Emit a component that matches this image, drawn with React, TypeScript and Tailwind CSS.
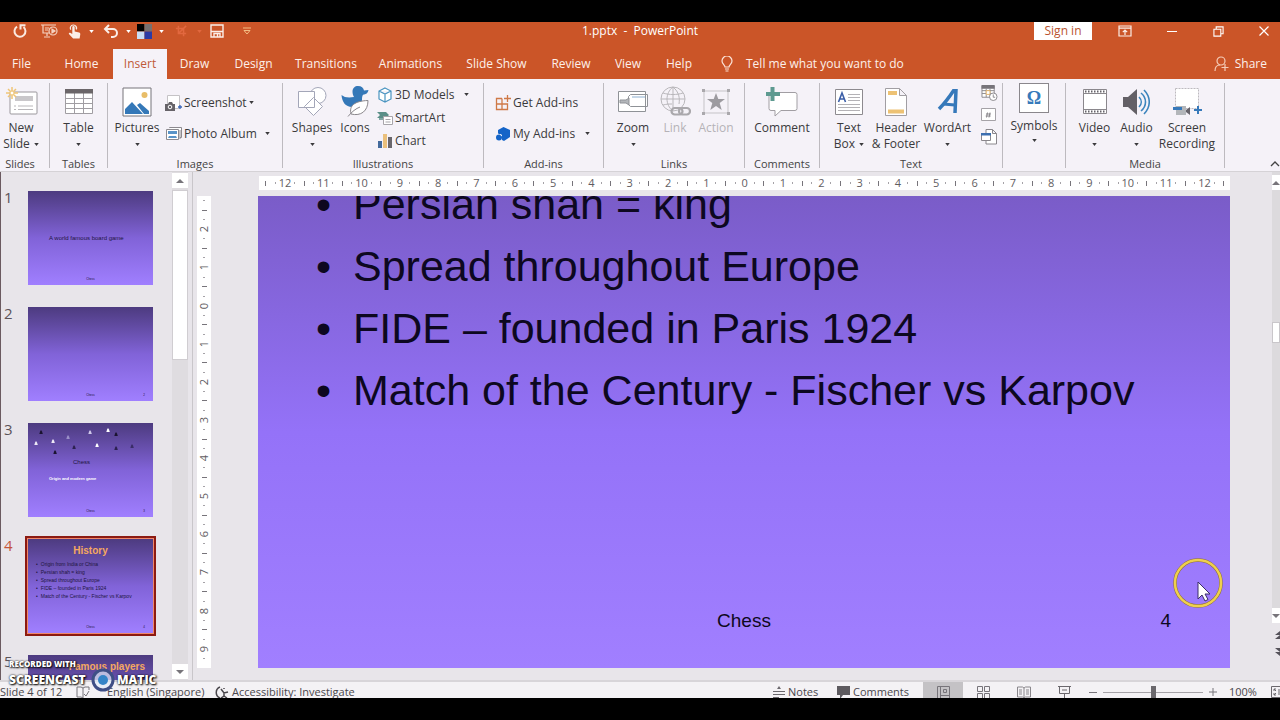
import type { ReactNode } from "react";
import clsx from "clsx";

const Caret = ({ className }: { className?: string }) => (
  <svg viewBox="0 0 6 4" className={clsx("h-[3px] w-[5px] shrink-0 fill-current", className)}>
    <path d="M0 0h6L3 4z" />
  </svg>
);

/* ---------- Title bar ---------- */

const QuickButton = ({ label, width, children }: { label: string; width: string; children: ReactNode }) => (
  <button type="button" aria-label={label} className={clsx("flex h-[18px] shrink-0 items-center justify-center", width)}>
    {children}
  </button>
);

const TitleBar = () => (
  <header className="grid h-[27px] grid-cols-[1fr_auto_1fr] items-start text-white">
    <div className="flex pl-[5px]">
      <QuickButton label="Repeat" width="w-[30px]">
        <svg viewBox="0 0 16 16" className="h-4 w-4 fill-none stroke-[#fbe9e0] stroke-2">
          <path d="M5 3.600A5.500 5.500 0 1 0 11.500 4M8.500 6.500V2.200H13.500" />
        </svg>
      </QuickButton>
      <QuickButton label="From beginning" width="w-[28px]">
        <svg viewBox="0 0 18 16" className="h-4 w-[18px] fill-none stroke-[#f5d3c2] stroke-[1.2]">
          <path d="M1 2h15M3 2v8h6M5 5h4M5 7h3M7 10v3M4 14h6" />
          <circle cx="13" cy="8" r="4" />
          <path d="M12 6v4l3-2z" fill="#f5d3c2" />
        </svg>
      </QuickButton>
      <QuickButton label="Touch mode" width="w-[22px]">
        <svg viewBox="0 0 14 16" className="h-[15px] w-[13px] fill-[#fbeee8]">
          <path d="M2.500 6.500a4 4 0 1 1 7-.5l-1.400-.6a2.600 2.600 0 1 0-4.500.2zM4.600 3.500a1.300 1.300 0 0 1 2.600 0V8l4.800 1.200c1 .3 1.400 1 1.200 2L12.500 15.500H5.500L1 10.800c-.4-1 .6-1.800 1.800-1.200l1.800 1z" />
        </svg>
      </QuickButton>
      <QuickButton label="Touch options" width="w-[12px]"><Caret /></QuickButton>
      <QuickButton label="Undo" width="w-[28px]">
        <svg viewBox="0 0 16 14" className="h-[14px] w-4 fill-none stroke-[#fbeee8] stroke-2">
          <path d="M6 1L2 5l4 4M2 5h8a4 4 0 0 1 0 8H8" />
        </svg>
      </QuickButton>
      <QuickButton label="Undo history" width="w-[6px]"><Caret /></QuickButton>
      <QuickButton label="Colors" width="w-[26px]">
        <svg viewBox="0 0 16 16" className="h-[15px] w-[15px]">
          <path d="M0 0h8v8H0z" fill="#000" />
          <path d="M8 0h8v8H8z" fill="#77706f" />
          <path d="M0 8h8v8H0z" fill="#c9ddf5" />
          <path d="M8 8h8v8H8z" fill="#2b3aa5" />
        </svg>
      </QuickButton>
      <QuickButton label="Color options" width="w-[8px]"><Caret /></QuickButton>
      <QuickButton label="Crop" width="w-[32px]">
        <svg viewBox="0 0 14 14" className="h-[12px] w-[12px] fill-none stroke-[#e2683f] stroke-[1.8]">
          <path d="M4 1v9h9M1 4h9v9M13 1L4 10" />
        </svg>
      </QuickButton>
      <QuickButton label="Crop options" width="w-[4px]"><Caret className="text-[#e2683f]" /></QuickButton>
      <QuickButton label="Save" width="w-[32px]">
        <svg viewBox="0 0 14 14" className="h-[14px] w-[14px] fill-none stroke-[#fbeee8] stroke-[1.4]">
          <path d="M1 1h12v12H1zM1 7.500h12M4 13v-3.500h6V13M7.500 10v3" />
        </svg>
      </QuickButton>
      <QuickButton label="Customize toolbar" width="w-[28px]">
        <svg viewBox="0 0 8 8" className="h-2 w-2 fill-none stroke-[#f3bd83]">
          <path d="M0 1h8M1 3.500h6L4 7z" />
        </svg>
      </QuickButton>
    </div>
    <h1 className="h-[18px] text-[12px] leading-[18px]">1.pptx&nbsp; -&nbsp; PowerPoint</h1>
    <div className="flex justify-end">
      <button type="button" className="mr-[9px] h-[18px] w-[58px] bg-white text-[12px] leading-[18px] text-[#b9532f]">Sign in</button>
      <QuickButton label="Ribbon display options" width="w-[47px]">
        <svg viewBox="0 0 14 12" className="h-3 w-[14px] fill-none stroke-[#fbeee8] stroke-[1.2]">
          <path d="M1 1h12v10H1zM1 3.200h12M7 10V5.500M4.800 7.200L7 5l2.200 2.200" />
        </svg>
      </QuickButton>
      <QuickButton label="Minimize" width="w-[47px]"><span className="h-px w-[10px] bg-white" /></QuickButton>
      <QuickButton label="Restore" width="w-[47px]">
        <svg viewBox="0 0 12 12" className="h-[11px] w-[11px] fill-none stroke-white stroke-[1.2]">
          <path d="M1 3.500h7.500V11H1zM3.500 3.500V1H11v7.500H8.500" />
        </svg>
      </QuickButton>
      <QuickButton label="Close" width="ml-[6px] w-[32px]">
        <svg viewBox="0 0 10 10" className="h-[10px] w-[10px] stroke-white stroke-[1.2]">
          <path d="M.5.5l9 9M9.500.5l-9 9" />
        </svg>
      </QuickButton>
    </div>
  </header>
);

/* ---------- Tabs ---------- */

const tabs = [
  { label: "File", width: "w-[43px] mr-[7px]" },
  { label: "Home", width: "w-[63px]" },
  { label: "Insert", width: "w-[54px]" },
  { label: "Draw", width: "w-[55px]" },
  { label: "Design", width: "w-[63px]" },
  { label: "Transitions", width: "w-[82px]" },
  { label: "Animations", width: "w-[87px]" },
  { label: "Slide Show", width: "w-[85px]" },
  { label: "Review", width: "w-[64px]" },
  { label: "View", width: "w-[50px]" },
  { label: "Help", width: "w-[52px]" },
];

const TabBar = () => (
  <nav className="flex h-[30px] text-[12px] text-[#fdf0ea]">
    {tabs.map(({ label, width }) => (
      <button
        key={label}
        type="button"
        className={clsx("shrink-0 whitespace-nowrap", width, label === "Insert" && "bg-[#f5f2f8] text-[#bf5a38]")}
      >
        {label}
      </button>
    ))}
    <button type="button" className="ml-[16px] flex items-center gap-[13px] whitespace-nowrap">
      <svg viewBox="0 0 12 16" className="h-4 w-3 fill-none stroke-[#fbe3d8] stroke-[1.2]">
        <path d="M4 11c0-2-3-3-3-6a5 5 0 0 1 10 0c0 3-3 4-3 6zM4 13h4M4.500 15h3" />
      </svg>
      Tell me what you want to do
    </button>
    <button type="button" className="ml-auto flex items-center gap-[6px] pr-[13px]">
      <svg viewBox="0 0 15 16" className="h-4 w-[15px] fill-none stroke-[#f5cdb9] stroke-[1.2]">
        <circle cx="7" cy="5" r="4" />
        <path d="M1 15c0-4 2-6 5-6M11 8v7M7.500 11.500h7" />
      </svg>
      Share
    </button>
  </nav>
);

/* ---------- Ribbon ---------- */

const Group = ({ label, width, children }: { label?: string; width: string; children: ReactNode }) => (
  <section className={clsx("flex h-[85px] shrink-0 flex-col border-r border-[#bdbabf]", width)}>
    <div className="flex flex-1">{children}</div>
    <div className="h-[8px] text-center text-[11px] leading-[8px] text-[#444]">{label}</div>
  </section>
);

type BigButtonProps = { label: string; second?: string; caret?: boolean; width: string; disabled?: boolean; children: ReactNode };

const BigButton = ({ label, second, caret, width, disabled, children }: BigButtonProps) => (
  <button
    type="button"
    disabled={disabled}
    className={clsx("flex shrink-0 flex-col items-center text-[12px] leading-4 whitespace-nowrap", width, disabled ? "text-[#b5b2b7]" : "text-[#3a3a3c]")}
  >
    <span className="flex h-[37px] items-center justify-center">{children}</span>
    <span>{label}</span>
    <span className="flex h-4 items-center gap-1">
      {second}
      {caret && <Caret />}
    </span>
  </button>
);

const SmallButton = ({ label, caret, gap, children }: { label: string; caret?: boolean; gap?: string; children: ReactNode }) => (
  <button type="button" className="flex flex-1 items-center gap-[2px] text-[12px] whitespace-nowrap text-[#3a3a3c]">
    <span className="flex w-4 shrink-0 items-center justify-center">{children}</span>
    {label}
    {caret && <Caret className={gap} />}
  </button>
);

const Ribbon = () => (
  <div className="flex h-[93px] shrink-0 overflow-hidden border-b border-[#d5d2d6] bg-[#f5f2f8] pt-1">
    <Group label="Slides" width="w-[50px] pr-[9px]">
      <BigButton label="New" second="Slide" caret width="w-[42px]">
        <svg viewBox="0 0 34 30" className="h-[30px] w-[34px] fill-none">
          <rect x="6" y="5" width="27" height="22" rx="1" fill="#fff" stroke="#9a979c" />
          <path d="M11 9h18v5H11z" fill="#c9c7ca" />
          <path d="M10 19h2M14 19h15M10 22.500h2M14 22.500h15" stroke="#b9b7ba" />
          <path d="M8 0v12M2 6h12M4 2l8 8M12 2l-8 8" stroke="#efc577" strokeWidth="1.500" />
          <circle cx="8" cy="6" r="2" fill="#fff" stroke="#efc577" />
        </svg>
      </BigButton>
    </Group>
    <Group label="Tables" width="w-[58px]">
      <BigButton label="Table" caret width="w-full">
        <svg viewBox="0 0 28 26" className="h-[26px] w-7 fill-none stroke-[#a09da2]">
          <path d="M.5.5h27v24H.5z" fill="#fff" />
          <path d="M.5 9.500h27M.5 14.500h27M.5 19.500h27M9.500 4v20M18.500 4v20" />
          <path d="M0 0h28v4.500H0z" fill="#6b6669" stroke="none" />
        </svg>
      </BigButton>
    </Group>
    <Group label="Images" width="w-[175px]">
      <BigButton label="Pictures" caret width="w-[58px]">
        <svg viewBox="0 0 30 30" className="h-[30px] w-[30px]">
          <path d="M1 1h28v28H1z" fill="#fff" stroke="#77747a" />
          <circle cx="22.500" cy="8" r="3" fill="#e8bd68" />
          <path d="M3 27v-5l7-7 11 12zM15 18l3-2 9 8v3h-5z" fill="#3478b8" />
        </svg>
      </BigButton>
      <div className="flex flex-col pt-[4px] pb-[11px]">
        <SmallButton label="Screenshot" caret>
          <svg viewBox="0 0 18 16" className="h-4 w-[18px] shrink-0">
            <path d="M2.500.5h12v13h-12z" fill="#fff" stroke="#c5c3c6" />
            <path d="M0 9h3l1-2h3l1 2h2v7H0z" fill="#666368" />
            <circle cx="5" cy="12" r="1.800" fill="#666368" stroke="#fff" />
            <path d="M15 10v4M13 12h4" stroke="#3a66b8" strokeWidth="1.300" />
          </svg>
        </SmallButton>
        <SmallButton label="Photo Album" caret gap="ml-[6px]">
          <svg viewBox="0 0 16 14" className="h-[14px] w-4 shrink-0">
            <path d="M3.500 1v-.500h12v10H14M.5 2.500h12v10H.5z" fill="#fff" stroke="#8d8a8f" />
            <path d="M2 4h9v3H2zM3 9h7l1 2H2z" fill="#5a94c8" />
            <path d="M14 3v9" stroke="#8d8a8f" />
          </svg>
        </SmallButton>
      </div>
    </Group>
    <Group label="Illustrations" width="w-[201px]">
      <BigButton label="Shapes" caret width="w-[58px]">
        <svg viewBox="0 0 30 30" className="h-[30px] w-[30px] fill-white stroke-[#a3a6b8]">
          <circle cx="21" cy="8.500" r="8" />
          <path d="M1.500 4.500h16v16h-16zM16.500 10.500l9 9-9 9-9-9z" />
        </svg>
      </BigButton>
      <BigButton label="Icons" width="w-[28px]">
        <svg viewBox="0 0 28 31" className="h-[31px] w-7">
          <path d="M11.500 5.500C11.500 2 14 0 17 0c3.500 0 5.500 2 6 4.500L27.500 4c-.5 3-2.500 4.500-5.500 4.800-1 1.700-1 3-1 5.200 0 4-5 7-10 7C4.500 21 1 16 .5 9c3 2.500 7 3 12.500 2-1-1.500-1.500-3.500-1.500-5.500z" fill="#3478b8" />
          <path d="M10 28c-2-8 3-13 17-13.500C27 25 20 30.500 10 28z" fill="#fff" stroke="#8a878c" />
          <path d="M7 30.500c4-5 8-8 12-9.500" fill="none" stroke="#8a878c" />
        </svg>
      </BigButton>
      <div className="ml-2 flex flex-col pb-[8px]">
        <SmallButton label="3D Models" caret gap="ml-[7px]">
          <svg viewBox="0 0 14 16" className="h-4 w-[14px] fill-white stroke-[#4a94c0] stroke-[1.200]">
            <path d="M7 1l6 3v8l-6 3-6-3V4zM1 4l6 3 6-3M7 7v8" />
          </svg>
        </SmallButton>
        <SmallButton label="SmartArt">
          <svg viewBox="0 0 16 14" className="h-[14px] w-4 shrink-0">
            <path d="M0 1h9l3 3-3 3H0l3-3z" fill="#5b8f88" />
            <path d="M2 8h4" stroke="#5b8f88" strokeWidth="1.500" />
            <path d="M6.500 5.500h9v8h-9z" fill="#fff" stroke="#a8a5aa" />
            <path d="M8.500 8.500h5M8.500 11h5" stroke="#a8a5aa" />
          </svg>
        </SmallButton>
        <SmallButton label="Chart">
          <svg viewBox="0 0 14 14" className="h-[14px] w-[14px]">
            <path d="M0 7h4v7H0z" fill="#436a9c" />
            <path d="M5 0h4v14H5z" fill="#eac07c" />
            <path d="M10 3h4v11h-4z" fill="#69666b" />
          </svg>
        </SmallButton>
      </div>
    </Group>
    <Group label="Add-ins" width="w-[120px]">
      <div className="ml-[11px] flex flex-col pt-[4px] pb-[11px]">
        <SmallButton label="Get Add-ins">
          <svg viewBox="0 0 16 16" className="h-4 w-4 fill-none stroke-[#cf7947] stroke-[1.300]">
            <path d="M7 3.500H1.500V14.500h11V9H1.500M7 3.500V14.500M12.500 0v7M9 3.500h7" />
          </svg>
        </SmallButton>
        <SmallButton label="My Add-ins" caret gap="ml-[8px]">
          <svg viewBox="0 0 14 14" className="h-[14px] w-[14px] fill-[#1464c8]">
            <path d="M7.500 0L14 3v7l-6 4-2-1V8L2 6.500V3z" />
            <circle cx="3" cy="10.500" r="3" />
            <path d="M6 8.500l-2-1" stroke="#fff" />
          </svg>
        </SmallButton>
      </div>
    </Group>
    <Group label="Links" width="w-[141px]">
      <BigButton label="Zoom" caret width="w-[58px]">
        <svg viewBox="0 0 30 22" className="h-[22px] w-[30px] fill-white stroke-[#8f9297]">
          <path d="M.5.500h27v20H.500zM12.500 3.500h17v12h-17l-2-2v-8z" />
          <path d="M2 9h6l3-2v7l-3-2H2z" fill="#b3b6ba" />
          <path d="M14 6h13" stroke="#8caed0" />
        </svg>
      </BigButton>
      <BigButton label="Link" disabled width="w-[26px]">
        <svg viewBox="0 0 31 31" className="h-[31px] w-[31px] fill-none stroke-[#b9b7bb]">
          <circle cx="13" cy="13" r="12" />
          <path d="M13 1v24M1 13h24M3 7c6 2 14 2 20 0M3 19c4-1 6-1 9-1M13 1c-8 6-8 18 0 24M13 1c6 5 7 11 6 17" />
          <rect x="11.500" y="22" width="11" height="6.500" rx="3.200" strokeWidth="2.200" stroke="#aaa8ac" />
          <rect x="19" y="22" width="11" height="6.500" rx="3.200" strokeWidth="2.200" stroke="#aaa8ac" />
        </svg>
      </BigButton>
      <BigButton label="Action" disabled width="w-[56px]">
        <svg viewBox="0 0 28 26" className="h-[26px] w-7 fill-none stroke-[#c5c3c7]">
          <path d="M2 2h24v22H2z" />
          <path d="M0 0h3v3H0zM25 0h3v3h-3zM0 23h3v3H0zM25 23h3v3h-3z" fill="#aaa8ac" stroke="none" />
          <path d="M14 4l2.300 6H23l-5.300 4 2 7L14 17l-5.700 4 2-7L5 10h6.700z" fill="#9d9ba0" stroke="none" />
        </svg>
      </BigButton>
    </Group>
    <Group label="Comments" width="w-[75px]">
      <BigButton label="Comment" width="w-full">
        <svg viewBox="0 0 32 30" className="h-[30px] w-8">
          <path d="M5 5.500h24a2 2 0 0 1 2 2v14a2 2 0 0 1-2 2H15l-6 5.500v-5.500H5a2 2 0 0 1-2-2v-14a2 2 0 0 1 2-2z" fill="#fff" stroke="#a19ea3" />
          <path d="M4.500 0h4v5H14v4H8.500v5h-4V9H0V5h4.500z" fill="#5d9a90" />
        </svg>
      </BigButton>
    </Group>
    <Group label="Text" width="w-[183px]">
      <BigButton label="Text" second="Box" caret width="w-[58px]">
        <svg viewBox="0 0 28 26" className="h-[26px] w-7">
          <path d="M.5.500h27v25H.500z" fill="#fff" stroke="#8d8a8f" />
          <path d="M3.500 13L7 4l3.500 9M5 10h4" fill="none" stroke="#3c5fa8" strokeWidth="1.600" />
          <path d="M13 5.500h12M13 8.500h12M13 11.500h12M3 15.500h22M3 18.500h22M3 21.500h22" stroke="#b4b2b6" />
        </svg>
      </BigButton>
      <BigButton label="Header" second="& Footer" width="w-[36px]">
        <svg viewBox="0 0 22 28" className="h-7 w-[22px]">
          <path d="M.5.500h14l7 7v20H.500zM14.500.500v7h7" fill="#fff" stroke="#a19ea3" />
          <path d="M3 3h9v4H3zM3 21.500h16v4H3z" fill="#edc274" />
        </svg>
      </BigButton>
      <BigButton label="WordArt" caret width="w-[67px]">
        <svg viewBox="0 0 22 26" className="h-[26px] w-[22px] fill-none stroke-[#3679ba]">
          <path d="M2 20C8 14 13 7 17 1l2 0-1 23" strokeWidth="3.500" />
          <path d="M6 15l12 1" strokeWidth="3" />
        </svg>
      </BigButton>
      <div className="flex flex-col gap-[7px] pt-[2px]">
        <button type="button" aria-label="Date and time">
          <svg viewBox="0 0 17 17" className="h-[16px] w-[17px] fill-white stroke-[#8a878c]">
            <path d="M.5 1h13v12H.500zM.5 6h13M.5 9h13M5 4v9M9 4v9" />
            <path d="M0 0h14v4H0z" fill="#77747a" stroke="none" />
            <path d="M5 6h4v4H5z" stroke="#e3b36a" />
            <circle cx="12.500" cy="12.500" r="4" />
            <path d="M12.500 10v3h2" />
          </svg>
        </button>
        <button type="button" aria-label="Slide number">
          <svg viewBox="0 0 16 14" className="h-[14px] w-4 fill-white stroke-[#a5a2a7]">
            <path d="M.5.500h14v12H.500z" />
            <path d="M6.500 4.500l-1 5M9 4.500l-1 5M5 6h5M4.700 8h5" stroke="#77747a" strokeWidth=".8" />
          </svg>
        </button>
        <button type="button" aria-label="Object">
          <svg viewBox="0 0 16 16" className="h-4 w-4 fill-white stroke-[#8a878c]">
            <path d="M5 .500h6.500l4 4v10.500H5zM11.500.500v4h4" />
            <path d="M.5 4.500h9v7H.500z" />
            <path d="M0 4h10v2.500H0z" fill="#3c6fb0" stroke="none" />
          </svg>
        </button>
      </div>
    </Group>
    <Group width="w-[63px]">
      <button type="button" className="flex w-full flex-col items-center text-[12px] leading-4 text-[#3a3a3c]">
        <span className="mb-[5px] flex h-[30px] w-[30px] items-center justify-center border border-[#8a878c] bg-white font-['Liberation_Serif',serif] text-[18px] font-bold text-[#3679ba]">
          Ω
        </span>
        Symbols
        <Caret className="mt-[5px]" />
      </button>
    </Group>
    <Group label="Media" width="w-[159px]">
      <BigButton label="Video" caret width="w-[57px]">
        <svg viewBox="0 0 24 26" className="h-[26px] w-6">
          <path d="M.5.500h23v24H.500z" fill="#fff" stroke="#8a878c" />
          <path d="M.5 4.500h23M.5 20.500h23" stroke="#8a878c" />
          <path d="M2 2.500h21M2 22.500h21" stroke="#66636a" strokeWidth="2" strokeDasharray="1.500 1.500" />
        </svg>
      </BigButton>
      <BigButton label="Audio" caret width="w-[27px]">
        <svg viewBox="0 0 27 26" className="h-[26px] w-[27px] fill-none stroke-[#3c85bd] stroke-[1.600]">
          <path d="M0 8h5l9-8v26l-9-8H0z" fill="#636066" stroke="none" />
          <path d="M16 8c3 3 3 7 0 10M18 4c6 5 6 13 0 18M21 1c7 7 7 17 0 24" />
        </svg>
      </BigButton>
      <BigButton label="Screen" second="Recording" width="w-[74px]">
        <svg viewBox="0 0 29 28" className="h-7 w-[29px]">
          <path d="M2.500.500h23v20h-23z" fill="#fff" stroke="#bdbabf" strokeDasharray="2 1" />
          <path d="M3 18h10v9H3z" fill="#b3b6ba" />
          <path d="M0 19h9v3H0z" fill="#3679ba" />
          <path d="M13 22l4-3v8l-4-3z" fill="#66636a" />
          <path d="M25 18v8M21 22h8" stroke="#3679ba" strokeWidth="2" />
        </svg>
      </BigButton>
    </Group>
    <button type="button" aria-label="Collapse the ribbon" className="ml-auto flex items-end pb-1 text-[#444]">
      <svg viewBox="0 0 10 6" className="h-[6px] w-[10px] fill-none stroke-current stroke-[1.300]">
        <path d="M1 5l4-4 4 4" />
      </svg>
    </button>
  </div>
);

/* ---------- Thumbnails ---------- */

const bullets = [
  "Persian shah = king",
  "Spread throughout Europe",
  "FIDE – founded in Paris 1924",
  "Match of the Century - Fischer vs Karpov",
];

const pieces = [
  { x: 13, y: 9, fill: "#1a1330" },
  { x: 8, y: 20, fill: "#eeeaf6" },
  { x: 25, y: 18, fill: "#eeeaf6" },
  { x: 27, y: 29, fill: "#1a1330" },
  { x: 40, y: 14, fill: "#9b90c8" },
  { x: 46, y: 24, fill: "#2c2150" },
  { x: 62, y: 9, fill: "#cfc8ea" },
  { x: 69, y: 22, fill: "#ffffff" },
  { x: 80, y: 7, fill: "#ffffff" },
  { x: 88, y: 11, fill: "#1a1330" },
  { x: 88, y: 25, fill: "#2c2150" },
  { x: 104, y: 23, fill: "#3a2d68" },
];

const Thumbnail = ({ n, active, children }: { n: number; active?: boolean; children?: ReactNode }) => (
  <li className="flex shrink-0 gap-[16px] pl-[3px]">
    <span className={clsx("w-2 text-[15px] leading-[12px]", active ? "text-[#c4553a]" : "text-[#5c5358]")}>{n}</span>
    <button
      type="button"
      aria-label={`Slide ${n}`}
      className={clsx(
        "flex h-[94px] w-[125px] flex-col overflow-hidden bg-linear-to-b from-[#4d3b80] via-[#8163d8] to-[#a07fff] text-left font-['Liberation_Sans',sans-serif] text-[5px] leading-[8px] text-[#1e1540]",
        active && "shadow-[0_0_0_1px_#f0876a,0_0_0_3px_#8c1a12]"
      )}
    >
      {children}
    </button>
  </li>
);

const ThumbFooter = ({ n }: { n?: number }) => (
  <span className="mt-auto grid w-full grid-cols-3 px-2 pb-[2px] text-[3px] leading-[8px]">
    <span className="col-start-2 text-center">Chess</span>
    <span className="text-right">{n}</span>
  </span>
);

const ScrollArrow = ({ label, down, className }: { label: string; down?: boolean; className?: string }) => (
  <button type="button" aria-label={label} className={clsx("flex h-[15px] w-full shrink-0 items-center justify-center bg-white text-[#77747a]", className)}>
    <svg viewBox="0 0 8 4" className={clsx("h-1 w-2 shrink-0 fill-current", down && "rotate-180")}>
      <path d="M0 4h8L4 0z" />
    </svg>
  </button>
);

const SlidePanel = () => (
  <aside className="flex w-[193px] shrink-0 border-x border-r-[#c9c6ca] border-l-[#6b5a60]">
    <ol className="flex min-h-0 flex-1 flex-col gap-[22px] overflow-hidden pt-[19px]">
      <Thumbnail n={1}>
        <span className="pt-[43px] pl-[21px] text-[6px]">A world famous board game</span>
        <ThumbFooter />
      </Thumbnail>
      <Thumbnail n={2}>
        <ThumbFooter n={2} />
      </Thumbnail>
      <Thumbnail n={3}>
        <svg viewBox="0 0 125 35" className="h-[35px] w-[125px] shrink-0">
          {pieces.map(({ x, y, fill }) => (
            <path key={`${x}-${y}`} d={`M${x} ${y - 2}l1 1.500 .8 2.500h-3.500l.8-2.500z`} fill={fill} />
          ))}
        </svg>
        <span className="pl-[45px] text-[6px]">Chess</span>
        <span className="pt-[9px] pl-[21px] text-[4px] font-bold text-white">Origin and modern game</span>
        <ThumbFooter n={3} />
      </Thumbnail>
      <Thumbnail n={4} active>
        <span className="w-full pt-[5px] text-center text-[10px] leading-[14px] font-bold text-[#f5a860]">History</span>
        <ul className="pt-[2px] pl-[8px]">
          {["Origin from India or China", ...bullets].map((text) => (
            <li key={text} className="flex gap-[3px] whitespace-nowrap">
              <span>•</span>
              {text}
            </li>
          ))}
        </ul>
        <ThumbFooter n={4} />
      </Thumbnail>
      <Thumbnail n={5}>
        <span className="w-full pt-[5px] pr-2 text-right text-[10px] leading-[14px] font-bold text-[#f5a860]">Famous players</span>
      </Thumbnail>
    </ol>
    <div className="mr-1 flex w-4 flex-col bg-[#dfdce0] pt-px pb-px">
      <ScrollArrow label="Scroll thumbnails up" className="mb-[2px]" />
      <div className="h-[170px] w-full border border-[#d0cdd1] bg-white" />
      <ScrollArrow label="Scroll thumbnails down" down className="mt-auto" />
    </div>
  </aside>
);

/* ---------- Editor ---------- */

const horizontalMarks = Array.from({ length: 101 }, (_, i) => i);
const verticalMarks = Array.from({ length: 49 }, (_, i) => i);

const HorizontalRuler = () => (
  <div className="ml-px flex h-[14px] items-center bg-white px-[2px] text-[11px] leading-[14px] text-[#5f5c61]">
    {horizontalMarks.map((i) => (
      <span key={i} className="flex w-0 flex-1 justify-center">
        {i % 4 === 2 && Math.abs((i - 50) / 4)}
        {i % 4 === 0 && <span className="h-[5px] w-px shrink-0 bg-[#77747a]" />}
        {i % 2 === 1 && <span className="h-[2px] w-px shrink-0 bg-[#a5a2a7]" />}
      </span>
    ))}
  </div>
);

const VerticalRuler = () => (
  <div className="flex w-[14px] shrink-0 flex-col overflow-hidden bg-white pb-[5px] text-[11px] leading-[14px] text-[#5f5c61]">
    {verticalMarks.map((i) => (
      <span key={i} className="flex h-0 flex-1 items-center justify-center">
        {i % 4 === 3 && <span className="-rotate-90">{Math.abs((i - 11) / 4)}</span>}
        {i % 4 === 1 && <span className="h-px w-[5px] bg-[#77747a]" />}
        {i % 2 === 0 && <span className="h-px w-[2px] bg-[#a5a2a7]" />}
      </span>
    ))}
  </div>
);

const Pointer = () => (
  <svg viewBox="0 0 50 50" className="absolute right-[7px] bottom-[60px] h-[50px] w-[50px]">
    <circle cx="25" cy="25" r="23" fill="none" stroke="#8d6f3a" strokeWidth="3.500" />
    <circle cx="25" cy="25" r="23" fill="none" stroke="#efd04e" strokeWidth="2.500" />
    <path d="M25 24v17l4-4 3 6 3-1.500-3-5.500h5z" fill="#fff" stroke="#3b2f66" />
  </svg>
);

const Slide = () => (
  <article className="relative flex min-w-0 flex-1 flex-col overflow-hidden bg-linear-to-b from-[#7a5cc8] via-[#9472f8] to-[#a17fff] font-['Liberation_Sans',sans-serif] text-[#0d0820]">
    <ul className="-mt-[23px] pl-[58px] text-[43px] leading-[62px] whitespace-nowrap">
      {bullets.map((text) => (
        <li key={text} className="flex">
          <span className="w-[37px]">•</span>
          {text}
        </li>
      ))}
    </ul>
    <footer className="mt-auto grid grid-cols-3 px-[59px] pb-[36px] text-[19px] leading-[22px]">
      <span className="col-start-2 text-center">Chess</span>
      <span className="text-right">4</span>
    </footer>
    <Pointer />
  </article>
);

const Editor = () => (
  <main className="flex min-w-0 flex-1">
    <div className="flex min-w-0 flex-1 flex-col pt-[4px] pr-[42px] pb-[12px] pl-1">
      <div className="mb-[6px] pl-[61px]">
        <HorizontalRuler />
      </div>
      <div className="flex min-h-0 flex-1 gap-[47px]">
        <VerticalRuler />
        <Slide />
      </div>
    </div>
    <div className="flex w-2 shrink-0 flex-col overflow-hidden bg-[#dcdadd] pt-[3px] text-[#55525a]">
      <ScrollArrow label="Scroll up" />
      <div className="mt-[132px] h-[21px] border border-[#c9c6ca] bg-white" />
      <ScrollArrow label="Scroll down" down className="mt-auto" />
      <div className="flex h-[57px] flex-col items-end gap-[9px] bg-[#e8e5ea] pt-2">
        <button type="button" aria-label="Previous slide">
          <svg viewBox="0 0 5 8" className="h-2 w-[5px] fill-current"><path d="M0 4l5-4v4zM0 8l5-4v4z" /></svg>
        </button>
        <button type="button" aria-label="Next slide">
          <svg viewBox="0 0 5 8" className="h-2 w-[5px] fill-current"><path d="M0 0h5v4zM0 4h5v4z" /></svg>
        </button>
      </div>
    </div>
  </main>
);

/* ---------- Status bar ---------- */

const StatusBar = () => (
  <footer className="h-[18px] shrink-0 overflow-hidden border-t-2 border-[#d8d5d9] bg-[#f4f2f5] text-[11px] text-[#4a474c]">
    <div className="flex h-[20px] items-center whitespace-nowrap">
      <span className="w-[76px]">Slide 4 of 12</span>
      <button type="button" aria-label="Spelling" className="w-[31px]">
        <svg viewBox="0 0 14 12" className="h-3 w-[14px] fill-none stroke-[#77747a]">
          <path d="M1 1h4l2 1 2-1h4M1 1v10h4l2 1V2M13 1v3M8 8l2 2 3-5" />
        </svg>
      </button>
      <button type="button" className="w-[108px] text-left">English (Singapore)</button>
      <button type="button" className="flex items-center gap-[3px]">
        <svg viewBox="0 0 14 13" className="h-[13px] w-[14px] fill-none stroke-[#4a474c] stroke-[1.500]">
          <path d="M5 1C0 3 0 10 5 12M6 3l3 4 4-1M9 7v3l-3 2M9 10l3 2M9 2v1" />
        </svg>
        Accessibility: Investigate
      </button>
      <div className="ml-auto flex items-center">
        <button type="button" className="flex w-[63px] items-center gap-[3px]">
          <svg viewBox="0 0 12 12" className="h-3 w-3 fill-none stroke-[#6b686d]">
            <path d="M0 5.500h12M0 8.500h12M0 11.500h6" />
            <path d="M4 3l2-3 2 3z" fill="#6b686d" stroke="none" />
          </svg>
          Notes
        </button>
        <button type="button" className="flex w-[87px] items-center gap-[2px]">
          <svg viewBox="0 0 15 13" className="h-[13px] w-[15px] fill-[#5d5a5f]"><path d="M1 0h13v9H7l-3 4V9H1z" /></svg>
          Comments
        </button>
        <button type="button" aria-label="Normal view" className="flex h-5 w-[40px] items-center justify-center bg-[#c4c2c5]">
          <svg viewBox="0 0 13 13" className="h-[13px] w-[13px] fill-none stroke-[#77747a]">
            <path d="M.5.500h12v12H.500zM3.500.500v12M3.500 9.500h9M6.500 3.500h3v3h-3z" />
          </svg>
        </button>
        <button type="button" aria-label="Slide sorter" className="flex w-[41px] justify-center">
          <svg viewBox="0 0 13 13" className="h-[13px] w-[13px] fill-none stroke-[#77747a]">
            <path d="M.5.500h5v5h-5zM7.500.500h5v5h-5zM.5 7.500h5v5h-5zM7.500 7.500h5v5h-5z" />
          </svg>
        </button>
        <button type="button" aria-label="Reading view" className="flex w-[40px] justify-center">
          <svg viewBox="0 0 14 13" className="h-[13px] w-[14px] fill-none stroke-[#8a878c]">
            <path d="M.5 1h5l1.500 1 1.500-1h5v10h-5L7 12l-1.500-1h-5zM7 2v10M2 4h3M2 6h3M2 8h3M9 4h3M9 6h3M9 8h3" />
          </svg>
        </button>
        <button type="button" aria-label="Slide show" className="flex w-[40px] justify-center">
          <svg viewBox="0 0 13 13" className="h-[13px] w-[13px] fill-none stroke-[#6b686d]">
            <path d="M0 .500h13M1.500.500v7h10v-7M4 4h5M6.500 8v4M4 12.500h5" />
          </svg>
        </button>
        <button type="button" aria-label="Zoom out" className="ml-[5px] h-px w-2 bg-[#77747a]" />
        <input
          type="range"
          aria-label="Zoom"
          min={0}
          max={200}
          defaultValue={100}
          className="mx-[6px] h-3 w-[100px] appearance-none bg-linear-to-r from-[#a5a2a7] to-[#a5a2a7] bg-[length:100%_1px] bg-center bg-no-repeat [&::-webkit-slider-thumb]:h-3 [&::-webkit-slider-thumb]:w-[5px] [&::-webkit-slider-thumb]:appearance-none [&::-webkit-slider-thumb]:bg-[#6b686d]"
        />
        <button type="button" aria-label="Zoom in" className="w-[20px]">
          <svg viewBox="0 0 8 8" className="h-2 w-2 stroke-[#77747a]"><path d="M0 4h8M4 0v8" /></svg>
        </button>
        <button type="button" className="w-[42px] text-left">100%</button>
        <button type="button" aria-label="Fit slide to window">
          <svg viewBox="0 0 9 12" className="h-3 w-[9px] fill-none stroke-[#6b686d]">
            <path d="M9 .500H.500v11H9M3 3l2 2M3 3h2M3 3v2M3 9l2-2M3 9h2M3 9V7M8 3v6" />
          </svg>
        </button>
      </div>
    </div>
  </footer>
);

const Watermark = () => (
  <div className="absolute bottom-[28px] left-[9px] font-['Open_Sans',sans-serif] font-extrabold text-white [text-shadow:1px_1px_2px_#000,0_0_2px_#000]">
    <div className="text-[8px] leading-[8px]">RECORDED WITH</div>
    <div className="flex h-6 items-center gap-[2px] text-[12px]">
      <span className="w-[80px]">SCREENCAST</span>
      <svg viewBox="0 0 24 24" className="h-6 w-6">
        <circle cx="12" cy="12" r="10" fill="#e3ecf8" fillOpacity=".7" stroke="#3f4f86" strokeWidth="3" />
        <circle cx="12" cy="12" r="5" fill="#3585c8" />
      </svg>
      <span>MATIC</span>
    </div>
  </div>
);

export default function App() {
  return (
    <div className="relative flex h-screen flex-col overflow-hidden bg-black py-[22px] font-['Open_Sans','Noto_Sans',sans-serif]">
      <div className="flex min-h-0 flex-1 flex-col bg-[#e8e5ea]">
        <div className="shrink-0 bg-[#cb5528]">
          <TitleBar />
          <TabBar />
        </div>
        <Ribbon />
        <div className="flex min-h-0 flex-1">
          <SlidePanel />
          <Editor />
        </div>
        <StatusBar />
      </div>
      <Watermark />
    </div>
  );
}
